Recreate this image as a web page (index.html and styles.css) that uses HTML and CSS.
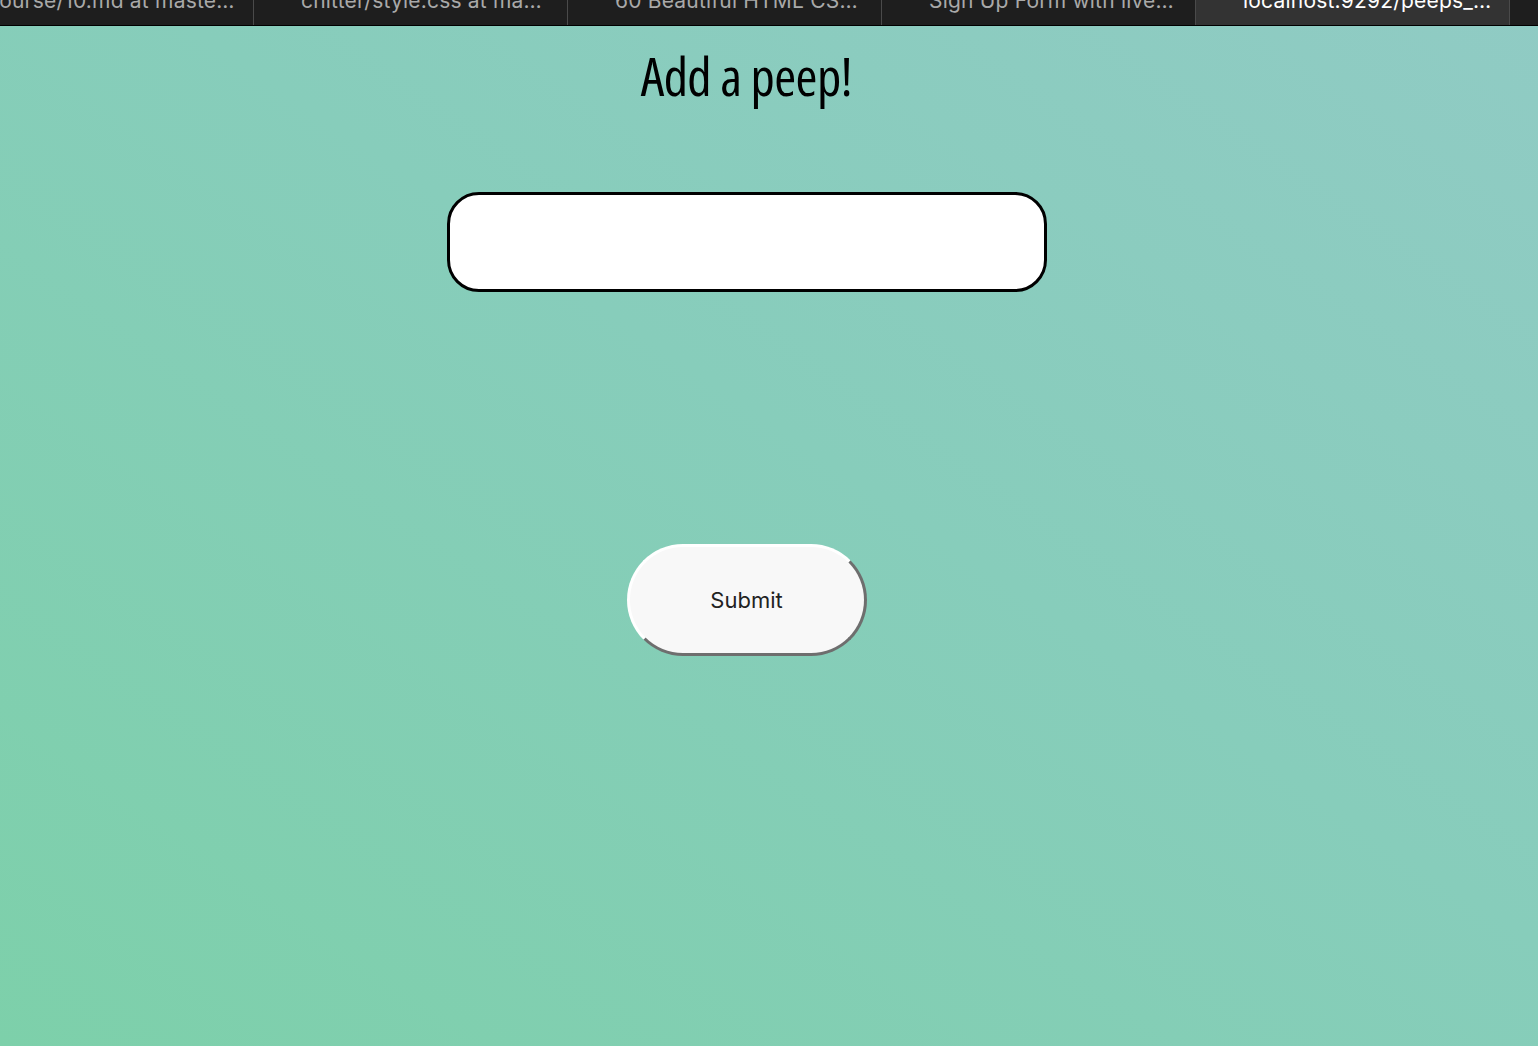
FILE: index.html
```html
<!DOCTYPE html>
<html>
<head>
<meta charset="utf-8">
<link rel="stylesheet" href="styles.css">
</head>
<body>
<div class="tabbar">
  <div class="tab first"><span>course/10.md at maste…</span></div>
  <div class="tab"><span>chitter/style.css at ma…</span></div>
  <div class="tab"><span>60 Beautiful HTML CS…</span></div>
  <div class="tab"><span>Sign Up Form with live…</span></div>
  <div class="tab active"><span>localhost:9292/peeps_…</span></div>
  <div class="tab rest"></div>
</div>
<main class="page">
  <h1 class="title">Add a peep!</h1>
  <form class="form">
    <input class="field" type="text">
    <button class="submit" type="button">Submit</button>
  </form>
</main>
</body>
</html>
```

FILE: styles.css
```css
html, body {
  margin: 0;
  padding: 0;
  height: 100%;
}
body {
  display: flex;
  flex-direction: column;
  background: linear-gradient(to top right, #7dd0aa 0%, #87cdbb 55%, #90cbc4 100%);
  font-family: "Liberation Sans", Arial, sans-serif;
  overflow: hidden;
}
.tabbar {
  display: flex;
  height: 25px;
  background: #1e1e1e;
  border-bottom: 1px solid #000;
  flex: none;
  overflow: hidden;
}
.tab {
  width: 313px;
  flex: none;
  border-right: 1px solid #4a4a4a;
  color: #a9a9a9;
  font-family: Inter, "Liberation Sans", Arial, sans-serif;
  font-size: 21px;
  position: relative;
  overflow: hidden;
}
.tab.first {
  margin-left: -60px;
}
.tab span {
  position: absolute;
  left: 47px;
  top: -10px;
  line-height: 21px;
  white-space: nowrap;
  letter-spacing: 0.2px;
}
.tab.active {
  background: #333333;
  color: #ffffff;
}
.tab.rest {
  flex: 1;
  border-right: none;
}
.page {
  flex: 1;
  display: flex;
  flex-direction: column;
  align-items: center;
  padding-right: 45px;
}
.title {
  margin: 22px 0 0;
  font-family: "Open Sans", "DejaVu Sans Condensed", sans-serif;
  font-stretch: 75%;
  font-weight: 400;
  font-size: 53px;
  line-height: 56px;
  color: #000;
  letter-spacing: -0.6px;
}
.form {
  display: flex;
  flex-direction: column;
  align-items: center;
  margin-top: 88px;
}
.field {
  box-sizing: border-box;
  width: 600px;
  height: 100px;
  border: 3px solid #000;
  border-radius: 32px;
  background: #fff;
  margin: 0;
  outline: none;
}
.submit {
  box-sizing: border-box;
  margin-top: 252px;
  width: 240px;
  height: 112px;
  border-radius: 56px;
  border-style: solid;
  border-width: 3px;
  border-color: #ffffff #6e6e6e #6e6e6e #ffffff;
  background: #f8f8f8;
  color: #222;
  font-family: Inter, "Liberation Sans", Arial, sans-serif;
  font-size: 22px;
  padding: 0;
}
```
